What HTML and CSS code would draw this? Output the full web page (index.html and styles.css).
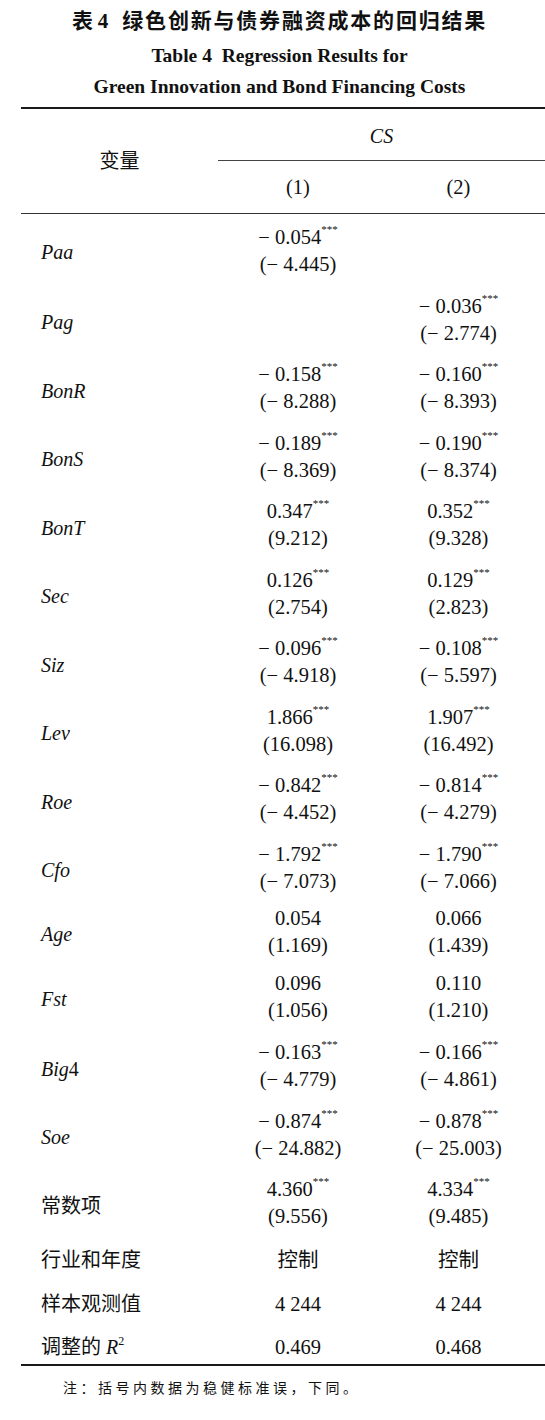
FILE: index.html
```html
<!DOCTYPE html>
<html lang="zh-CN">
<head>
<meta charset="utf-8">
<title>表4 绿色创新与债券融资成本的回归结果</title>
<link rel="stylesheet" href="styles.css">
</head>
<body>
<div class="page">
  <div class="title">
    <h1 class="title-cn">表<span class="num">4</span>&ensp;绿色创新与债券融资成本的回归结果</h1>
    <p class="title-en">Table 4&nbsp; Regression Results for<br>Green Innovation and Bond Financing Costs</p>
  </div>
  <table class="reg">
    <colgroup><col class="c0"><col class="c1"><col class="c2"></colgroup>
    <thead>
      <tr class="hrow1"><th rowspan="2" class="varhead">变量</th><th colspan="2" class="dep"><i>CS</i></th></tr>
      <tr class="hrow2"><th class="v1">(1)</th><th class="v2">(2)</th></tr>
    </thead>
    <tbody>
      <tr class="sig top"><td class="lab"><i>Paa</i></td><td class="v1"><span class="l">− 0.054<sup class="st">***</sup></span><span class="l">(− 4.445)</span></td><td class="v2"></td></tr>
      <tr class="sig"><td class="lab"><i>Pag</i></td><td class="v1"></td><td class="v2"><span class="l">− 0.036<sup class="st">***</sup></span><span class="l">(− 2.774)</span></td></tr>
      <tr class="sig"><td class="lab"><i>BonR</i></td><td class="v1"><span class="l">− 0.158<sup class="st">***</sup></span><span class="l">(− 8.288)</span></td><td class="v2"><span class="l">− 0.160<sup class="st">***</sup></span><span class="l">(− 8.393)</span></td></tr>
      <tr class="sig"><td class="lab"><i>BonS</i></td><td class="v1"><span class="l">− 0.189<sup class="st">***</sup></span><span class="l">(− 8.369)</span></td><td class="v2"><span class="l">− 0.190<sup class="st">***</sup></span><span class="l">(− 8.374)</span></td></tr>
      <tr class="sig"><td class="lab"><i>BonT</i></td><td class="v1"><span class="l">0.347<sup class="st">***</sup></span><span class="l">(9.212)</span></td><td class="v2"><span class="l">0.352<sup class="st">***</sup></span><span class="l">(9.328)</span></td></tr>
      <tr class="sig"><td class="lab"><i>Sec</i></td><td class="v1"><span class="l">0.126<sup class="st">***</sup></span><span class="l">(2.754)</span></td><td class="v2"><span class="l">0.129<sup class="st">***</sup></span><span class="l">(2.823)</span></td></tr>
      <tr class="sig"><td class="lab"><i>Siz</i></td><td class="v1"><span class="l">− 0.096<sup class="st">***</sup></span><span class="l">(− 4.918)</span></td><td class="v2"><span class="l">− 0.108<sup class="st">***</sup></span><span class="l">(− 5.597)</span></td></tr>
      <tr class="sig"><td class="lab"><i>Lev</i></td><td class="v1"><span class="l">1.866<sup class="st">***</sup></span><span class="l">(16.098)</span></td><td class="v2"><span class="l">1.907<sup class="st">***</sup></span><span class="l">(16.492)</span></td></tr>
      <tr class="sig"><td class="lab"><i>Roe</i></td><td class="v1"><span class="l">− 0.842<sup class="st">***</sup></span><span class="l">(− 4.452)</span></td><td class="v2"><span class="l">− 0.814<sup class="st">***</sup></span><span class="l">(− 4.279)</span></td></tr>
      <tr class="sig"><td class="lab"><i>Cfo</i></td><td class="v1"><span class="l">− 1.792<sup class="st">***</sup></span><span class="l">(− 7.073)</span></td><td class="v2"><span class="l">− 1.790<sup class="st">***</sup></span><span class="l">(− 7.066)</span></td></tr>
      <tr class="plain"><td class="lab"><i>Age</i></td><td class="v1"><span class="l">0.054</span><span class="l">(1.169)</span></td><td class="v2"><span class="l">0.066</span><span class="l">(1.439)</span></td></tr>
      <tr class="plain"><td class="lab"><i>Fst</i></td><td class="v1"><span class="l">0.096</span><span class="l">(1.056)</span></td><td class="v2"><span class="l">0.110</span><span class="l">(1.210)</span></td></tr>
      <tr class="sig"><td class="lab"><i>Big</i>4</td><td class="v1"><span class="l">− 0.163<sup class="st">***</sup></span><span class="l">(− 4.779)</span></td><td class="v2"><span class="l">− 0.166<sup class="st">***</sup></span><span class="l">(− 4.861)</span></td></tr>
      <tr class="sig"><td class="lab"><i>Soe</i></td><td class="v1"><span class="l">− 0.874<sup class="st">***</sup></span><span class="l">(− 24.882)</span></td><td class="v2"><span class="l">− 0.878<sup class="st">***</sup></span><span class="l">(− 25.003)</span></td></tr>
      <tr class="sig"><td class="lab">常数项</td><td class="v1"><span class="l">4.360<sup class="st">***</sup></span><span class="l">(9.556)</span></td><td class="v2"><span class="l">4.334<sup class="st">***</sup></span><span class="l">(9.485)</span></td></tr>
      <tr class="one first"><td class="lab">行业和年度</td><td class="v1">控制</td><td class="v2">控制</td></tr>
      <tr class="one"><td class="lab">样本观测值</td><td class="v1">4 244</td><td class="v2">4 244</td></tr>
      <tr class="one last"><td class="lab">调整的 <i>R</i><sup class="sq">2</sup></td><td class="v1">0.469</td><td class="v2">0.468</td></tr>
    </tbody>
  </table>
  <p class="note">注：括号内数据为稳健标准误，下同。</p>
</div>
</body>
</html>
```

FILE: styles.css
```css
html, body {
  margin: 0;
  padding: 0;
  background: #ffffff;
}

body {
  font-family: "Liberation Serif", "Noto Sans CJK SC", serif;
  font-size: 20px;
  color: #111111;
}

.page {
  margin-left: 21px;
  width: 524px;
}

.title {
  padding-right: 7px;
  text-align: center;
}

.title-cn {
  margin: 4px 0 0;
  font-family: "Noto Sans CJK SC", sans-serif;
  font-weight: 700;
  font-size: 21px;
  line-height: 30px;
  letter-spacing: 1.8px;
}

.title-cn .num {
  font-family: "Liberation Serif", serif;
  margin-left: 3px;
}

.title-en {
  margin: 4px 0 0;
  font-family: "Liberation Serif", serif;
  font-weight: 700;
  font-size: 19.5px;
  line-height: 31px;
}

.reg {
  margin-top: 5px;
  width: 524px;
  table-layout: fixed;
  border-collapse: collapse;
  border-top: 2px solid #1a1a1a;
  border-bottom: 2px solid #1a1a1a;
}

.c0 { width: 197px; }
.c1 { width: 160px; }
.c2 { width: 167px; }

.reg th,
.reg td {
  padding: 0;
  font-weight: normal;
  line-height: 27px;
  text-align: center;
}

.reg .v1,
.reg .v2 {
  font-size: 20.5px;
}

.reg .v2 {
  padding-right: 6px;
}

.hrow1 th {
  padding-top: 14px;
  padding-bottom: 10px;
}

.hrow1 .dep {
  border-bottom: 1px solid #444444;
}

.hrow2 th {
  padding-top: 13px;
  padding-bottom: 12px;
  border-bottom: 1px solid #333333;
}

.reg .varhead {
  vertical-align: middle;
  padding: 0;
  border-bottom: 1px solid #333333;
}

.reg .lab {
  text-align: left;
  padding-left: 20px;
  vertical-align: middle;
}

.sig .lab {
  padding-top: 14px;
}

.plain .lab {
  padding-top: 8px;
}

.l {
  display: block;
}

.st {
  font-size: 11px;
  line-height: 0;
  vertical-align: 11px;
  color: #111111;
}

.sq {
  font-size: 12px;
  line-height: 0;
  vertical-align: 9px;
}

.sig td {
  padding-top: 8px;
  padding-bottom: 6.5px;
}

.sig.top td {
  padding-top: 10px;
}

.sig.top .lab {
  padding-top: 12px;
}

.plain td {
  padding-top: 4px;
  padding-bottom: 7px;
}

.one td {
  padding-top: 8px;
  padding-bottom: 8px;
}

.one.first td {
  padding-top: 10px;
  padding-bottom: 9px;
}

.one.last td {
  padding-bottom: 3px;
}

.note {
  margin: 11px 0 0 42px;
  font-family: "Noto Sans CJK SC", sans-serif;
  font-size: 14px;
  line-height: 20px;
  letter-spacing: 3.5px;
}
```
